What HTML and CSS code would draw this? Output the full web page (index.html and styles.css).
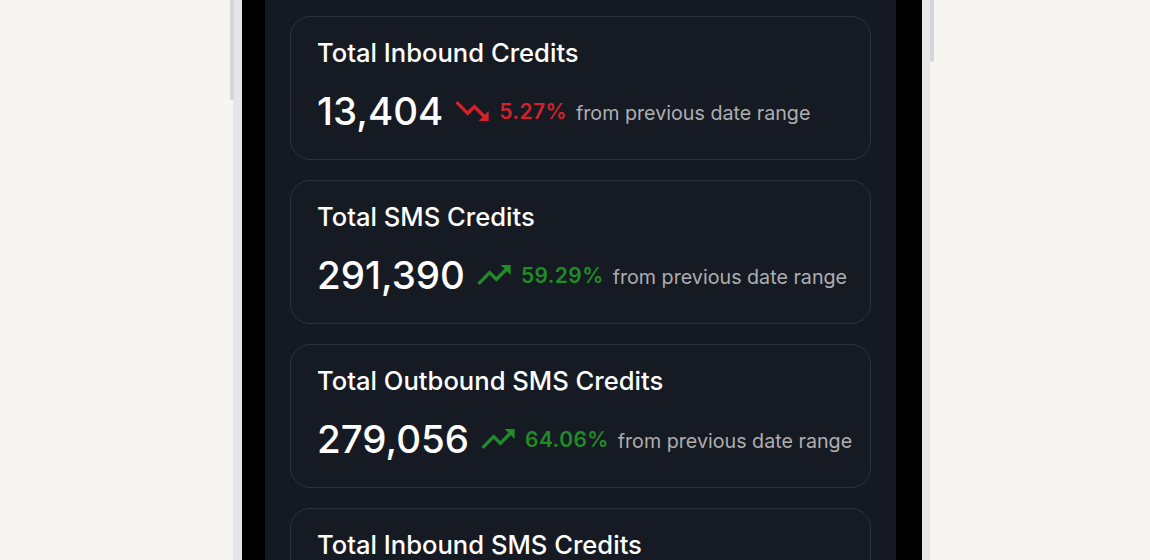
FILE: index.html
```html
<!DOCTYPE html>
<html lang="en">
<head>
<meta charset="utf-8">
<title>Credits</title>
<link rel="stylesheet" href="styles.css">
</head>
<body>
<div class="stage">
  <div class="phone">
    <span class="btn btn-left"></span>
    <span class="btn btn-right"></span>
    <div class="bezel">
      <div class="screen">
        <div class="card">
          <div class="card-title">Total Inbound Credits</div>
          <div class="stat">
            <span class="value">13,404</span>
            <svg class="trend down" viewBox="0 0 24 24"><path d="m16 18 2.29-2.29-4.88-4.88-4 4L2 7.41 3.41 6l6 6 4-4 6.3 6.29L22 12v6z"/></svg>
            <span class="pct down">5.27%</span>
            <span class="note">from previous date range</span>
          </div>
        </div>
        <div class="card">
          <div class="card-title">Total SMS Credits</div>
          <div class="stat">
            <span class="value">291,390</span>
            <svg class="trend up" viewBox="0 0 24 24"><path d="m16 6 2.29 2.29-4.88 4.88-4-4L2 16.59 3.41 18l6-6 4 4 6.3-6.29L22 12V6z"/></svg>
            <span class="pct up">59.29%</span>
            <span class="note">from previous date range</span>
          </div>
        </div>
        <div class="card">
          <div class="card-title">Total Outbound SMS Credits</div>
          <div class="stat">
            <span class="value">279,056</span>
            <svg class="trend up" viewBox="0 0 24 24"><path d="m16 6 2.29 2.29-4.88 4.88-4-4L2 16.59 3.41 18l6-6 4 4 6.3-6.29L22 12V6z"/></svg>
            <span class="pct up">64.06%</span>
            <span class="note">from previous date range</span>
          </div>
        </div>
        <div class="card">
          <div class="card-title">Total Inbound SMS Credits</div>
        </div>
      </div>
    </div>
  </div>
</div>
</body>
</html>
```
FILE: styles.css
```css
html, body {
  margin: 0;
  padding: 0;
  height: 100%;
  overflow: hidden;
}
body {
  background: #f6f5f1;
  font-family: Inter, "Noto Sans", "Liberation Sans", sans-serif;
}
.stage {
  display: flex;
  justify-content: center;
  height: 560px;
}
.phone {
  position: relative;
  width: 680px;
  height: 560px;
  margin-left: 13px;
  border-left: 9px solid #e6e6e8;
  border-right: 8px solid #e6e6e8;
  box-sizing: content-box;
}
.btn {
  position: absolute;
  top: 0;
  width: 4px;
  background: #d6d6d9;
  border-radius: 0 0 3px 3px;
}
.btn-left { left: -12px; height: 100px; }
.btn-right { right: -12px; height: 62px; }
.bezel {
  height: 100%;
  background: #000;
  padding: 0 26px 0 23px;
  box-sizing: border-box;
}
.screen {
  height: 100%;
  background: #151921;
  padding: 16px 25px 0;
  box-sizing: border-box;
  display: flex;
  flex-direction: column;
  gap: 20px;
  overflow: hidden;
}
.card {
  flex: none;
  height: 144px;
  box-sizing: border-box;
  border: 1.5px solid #2e323a;
  border-radius: 20px;
  background: #161a22;
  padding: 20px 26px 0;
  color: #fff;
}
.card-title {
  font-size: 25.6px;
  font-weight: 500;
  line-height: 32px;
  white-space: nowrap;
}
.stat {
  display: flex;
  align-items: center;
  margin-top: 18px;
  height: 48px;
  white-space: nowrap;
}
.value {
  font-size: 38.5px;
  font-weight: 500;
  margin-right: 9px;
  flex: none;
}
.trend {
  flex: none;
  width: 40px;
  height: 40px;
  margin-right: 7px;
}
.trend.down { fill: #d3222a; }
.trend.up { fill: #1f8c27; }
.pct {
  flex: none;
  font-size: 21px;
  font-weight: 600;
  letter-spacing: 0.4px;
  margin-right: 9px;
}
.pct.down { color: #d3222a; }
.pct.up { color: #1f8c27; }
.note {
  flex: none;
  font-size: 19.7px;
  color: #aeaeb0;
  margin-top: 3px;
}
```
